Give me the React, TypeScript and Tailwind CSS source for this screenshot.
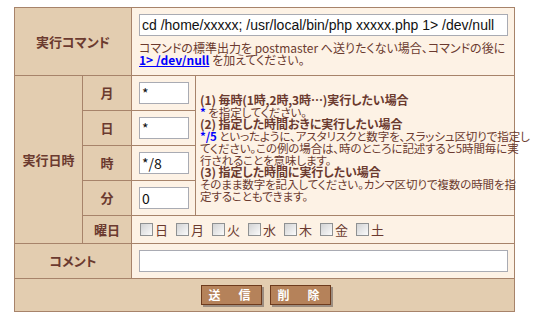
const jp = { fontFamily: '"Noto Sans CJK JP", "Liberation Sans", sans-serif' };

function Check({ label }: { label: string }) {
  return (
    <span className="flex items-center">
      <span className="w-[13px] h-[13px] border border-[#8f9192] bg-gradient-to-br from-[#d2d3d4] to-[#fbfbfb]" />
      <span className="ml-[2px] w-[20px]">{label}</span>
    </span>
  );
}

export default function App() {
  const th = 'bg-[#e3cdb0] border border-[#a7836a] text-[#6b3a2f] font-bold text-[13px] text-center';
  const td = 'bg-[#fdf2e5] border border-[#a7836a]';
  const small = 'w-[50px] h-[22px] border border-[#a9abb3] bg-white px-[2px] text-[14px] text-[#111] leading-[20px]';
  const days = ['日', '月', '火', '水', '木', '金', '土'];

  return (
    <div className="w-[539px] h-[324px] bg-white pl-[14px] pt-[7px] text-[#6b3a2f] text-[12px] [font-feature-settings:'palt']" style={jp}>
      <table className="border-collapse table-fixed w-[500px]">
        <colgroup>
          <col className="w-[68px]" />
          <col className="w-[49px]" />
          <col className="w-[64px]" />
          <col className="w-[319px]" />
        </colgroup>
        <tbody>
          <tr className="h-[68px]">
            <th colSpan={2} className={th}>実行コマンド</th>
            <td colSpan={2} className={`${td} pl-[7px] pr-[6px] align-top pt-[6px]`}>
              <div
                className="h-[22px] border border-[#a9abb3] bg-white px-[2px] text-[14px] leading-[20px] text-[#111] whitespace-nowrap overflow-hidden"
                style={{ fontFamily: '"Liberation Sans", Arial, sans-serif' }}
              >
                cd /home/xxxxx; /usr/local/bin/php xxxxx.php 1&gt; /dev/null
              </div>
              <div className="mt-[6px] leading-[12px] whitespace-nowrap">
                コマンドの標準出力を postmaster へ送りたくない場合、コマンドの後に
                <br />
                <a className="text-[#0000ff] font-bold underline" href="#">1&gt; /dev/null</a> を加えてください。
              </div>
            </td>
          </tr>
          <tr className="h-[35px]">
            <th rowSpan={5} className={th}>実行日時</th>
            <th className={th}>月</th>
            <td className={`${td} pl-[7px]`}><div className={small}>*</div></td>
            <td rowSpan={4} className={`${td} pl-[4px] align-middle`}>
              <div className="text-[11.5px] leading-[12px] tracking-[-0.1px] whitespace-nowrap pt-[4px]">
                <b className="text-[12px]">(1) 毎時(1時,2時,3時…)実行したい場合</b>
                <br />
                <b className="text-[#0000ff]">*</b> を指定してください。
                <br />
                <b className="text-[12px]">(2) 指定した時間おきに実行したい場合</b>
                <br />
                <b className="text-[#0000ff]">*/5</b> といったように、アスタリスクと数字を、スラッシュ区切りで指定し
                <br />
                てください。この例の場合は、時のところに記述すると5時間毎に実
                <br />
                行されることを意味します。
                <br />
                <b className="text-[12px]">(3) 指定した時間に実行したい場合</b>
                <br />
                そのまま数字を記入してください。カンマ区切りで複数の時間を指
                <br />
                定することもできます。
              </div>
            </td>
          </tr>
          <tr className="h-[35px]">
            <th className={th}>日</th>
            <td className={`${td} pl-[7px]`}><div className={small}>*</div></td>
          </tr>
          <tr className="h-[35px]">
            <th className={th}>時</th>
            <td className={`${td} pl-[7px]`}><div className={small}>*/8</div></td>
          </tr>
          <tr className="h-[35px]">
            <th className={th}>分</th>
            <td className={`${td} pl-[7px]`}><div className={small}>0</div></td>
          </tr>
          <tr className="h-[28px]">
            <th className={th}>曜日</th>
            <td colSpan={2} className={`${td} pl-[8px]`}>
              <div className="flex gap-[1px] text-[13px] leading-[13px]">
                {days.map((d) => (
                  <Check key={d} label={d} />
                ))}
              </div>
            </td>
          </tr>
          <tr className="h-[35px]">
            <th colSpan={2} className={th}>コメント</th>
            <td colSpan={2} className={`${td} pl-[7px] pr-[6px]`}>
              <div className="h-[22px] border border-[#a9abb3] bg-white" />
            </td>
          </tr>
          <tr className="h-[33px]">
            <td colSpan={4} className="bg-[#e3cdb0] border border-[#a7836a]">
              <div className="flex justify-center gap-[8px] pl-[2px]">
                {['送　信', '削　除'].map((b) => (
                  <button
                    key={b}
                    className="w-[61px] h-[20px] bg-[#b5825a] border border-[#6e3b1d] text-white font-bold text-[12px] leading-[18px] tracking-[3px] shadow-[2px_2px_0_#9c8d80]"
                  >
                    {b}
                  </button>
                ))}
              </div>
            </td>
          </tr>
        </tbody>
      </table>
    </div>
  );
}
